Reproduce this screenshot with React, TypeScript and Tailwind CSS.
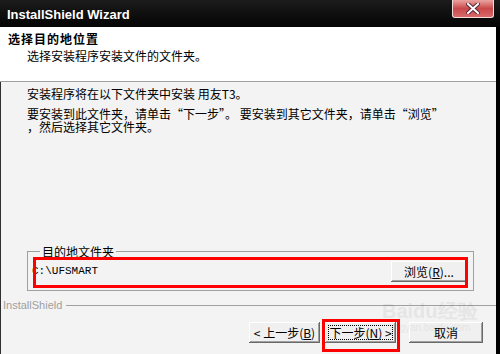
import React from "react";

const cjk = "font-['SimSun','Noto_Sans_CJK_SC',sans-serif]";
const fw = "[font-feature-settings:'fwid']";

function ClassicButton({
  children,
  width,
  focused,
}: {
  children: React.ReactNode;
  width: string;
  focused?: boolean;
}) {
  return (
    <button
      className={`${width} flex h-[21px] items-center justify-center bg-[#f0f0f0] text-[12px] leading-none whitespace-nowrap text-black shadow-[inset_-1px_-1px_#696969,inset_1px_1px_#ffffff,inset_-2px_-2px_#a0a0a0] ${cjk}`}
    >
      {focused ? (
        <span className="flex h-[15px] w-[65px] items-center justify-center border border-dotted border-black whitespace-nowrap">
          {children}
        </span>
      ) : (
        children
      )}
    </button>
  );
}

export default function App() {
  return (
    <div className="relative h-[354px] w-[500px] overflow-hidden bg-black">
      {/* title bar */}
      <div className="flex h-[27px] items-start justify-between bg-gradient-to-b from-[#1c1c1c] to-[#050505]">
        <span className="pl-[7px] pt-[7px] font-['Liberation_Sans',sans-serif] text-[13px] leading-[15px] font-bold text-white">
          InstallShield Wizard
        </span>
        <div className="mr-[6px] flex h-[18px] w-[42px] items-center justify-center rounded-b-[3px] border border-t-0 border-[#f3dcdc] bg-gradient-to-b from-[#e9a3a3] via-[#c9474a] to-[#d86a6a]">
          <svg width="14" height="11" viewBox="0 0 14 11">
            <path
              d="M2 1 L12 10 M12 1 L2 10"
              stroke="#5a2a3a"
              strokeWidth="4"
              strokeLinecap="square"
            />
            <path
              d="M2 1 L12 10 M12 1 L2 10"
              stroke="#ffffff"
              strokeWidth="2"
              strokeLinecap="square"
            />
          </svg>
        </div>
      </div>

      <div className="mr-[4px] flex h-[327px] flex-col">
        {/* header */}
        <div className={`h-[54px] bg-white ${cjk}`}>
          <div className="pl-[8px] pt-[5px] text-[12px] leading-[13px] font-bold tracking-[1px] text-black">
            选择目的地位置
          </div>
          <div className="pl-[27px] pt-[4px] text-[12px] leading-[13px] text-black">
            选择安装程序安装文件的文件夹。
          </div>
        </div>
        <div className="h-px bg-[#a0a0a0]" />

        {/* body */}
        <div className={`flex flex-1 flex-col border-l border-[#303030] bg-[#f3f3f3] text-black ${cjk}`}>
          <p className="mt-[5px] pl-[26px] text-[12px] leading-[13px] whitespace-nowrap">
            安装程序将在以下文件夹中安装 用友T3。
          </p>
          <p className="mt-[7px] pl-[26px] text-[12px] leading-[13px] whitespace-nowrap">
            要安装到此文件夹，请单击<span className={fw}>“</span>下一步
            <span className={fw}>”</span>。 要安装到其它文件夹，请单击
            <span className={fw}>“</span>浏览<span className={fw}>”</span>
            <br />
            ，然后选择其它文件夹。
          </p>

          <fieldset className="mt-[112px] ml-[26px] w-[447px] border border-[#a0a0a0] px-[6px] pt-[3px] pb-[8px]">
            <legend className="ml-[6px] px-[2px] text-[12px] leading-[13px]">
              目的地文件夹
            </legend>
            <div className="flex items-center justify-between">
              <span className="-ml-[2px] font-['Liberation_Mono',monospace] text-[11px] leading-none">
                C:\UFSMART
              </span>
              <ClassicButton width="w-[76px]">
                浏览(<span className="underline">R</span>)...
              </ClassicButton>
            </div>
          </fieldset>

          <div className="mt-[8px] flex items-center gap-[4px] pl-[2px]">
            <span className="font-['Liberation_Sans',sans-serif] text-[11px] leading-[13px] text-[#a0a0a0]">
              InstallShield
            </span>
            <div className="h-px flex-1 bg-[#a0a0a0]" />
          </div>

          <div className="mt-[10px] flex justify-end pr-[13px]">
            <ClassicButton width="w-[71px]">
              &lt; 上一步(<span className="underline">B</span>)
            </ClassicButton>
            <div className="ml-[5px]">
              <ClassicButton width="w-[71px]" focused>
                下一步(<span className="underline">N</span>) &gt;
              </ClassicButton>
            </div>
            <div className="ml-[13px]">
              <ClassicButton width="w-[74px]">取消</ClassicButton>
            </div>
          </div>
        </div>
      </div>

      {/* annotation boxes */}
      <div className="absolute top-[257px] left-[33px] h-[31px] w-[435px] border-[3px] border-[#ff0000]" />
      <div className="absolute top-[319px] left-[322px] h-[33px] w-[78px] border-[3px] border-[#ff0000]" />

      {/* faint watermark */}
      <div className="pointer-events-none absolute top-[300px] left-[382px] flex flex-col items-center font-['Liberation_Sans',sans-serif] text-[#000000] opacity-[0.05]">
        <span className="text-[20px] leading-[22px] font-bold">Baidu经验</span>
        <span className="text-[10px] leading-[12px]">jingyan.baidu.com</span>
      </div>
    </div>
  );
}
